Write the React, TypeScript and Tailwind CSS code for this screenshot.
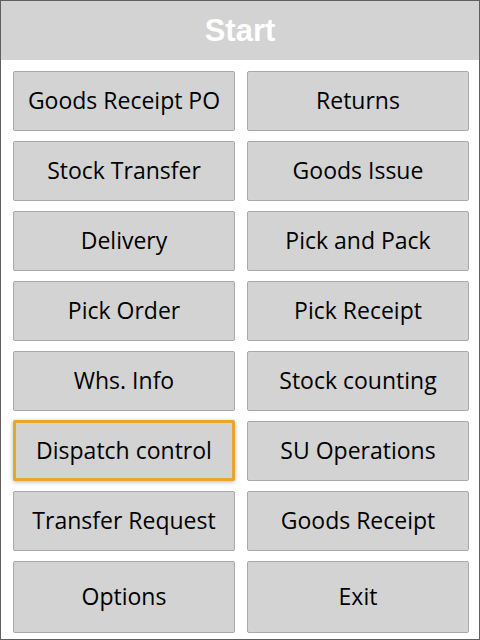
const items: string[] = [
  "Goods Receipt PO",
  "Returns",
  "Stock Transfer",
  "Goods Issue",
  "Delivery",
  "Pick and Pack",
  "Pick Order",
  "Pick Receipt",
  "Whs. Info",
  "Stock counting",
  "Dispatch control",
  "SU Operations",
  "Transfer Request",
  "Goods Receipt",
];

function MenuButton({ label, active, tall }: { label: string; active?: boolean; tall?: boolean }) {
  return (
    <button
      className={
        active
          ? "h-[61px] -mt-[1px] flex items-center justify-center pb-[1px] bg-[#d3d3d3] border-[3px] border-[#e4a82a] rounded-[2px] shadow-[0_1px_4px_rgba(0,0,0,0.3)] text-[23px] text-black"
          : tall
          ? "h-[72px] flex items-center justify-center pb-[1px] bg-[#d3d3d3] border border-[#a9a9a9] rounded-[2px] text-[23px] text-black"
          : "h-[60px] flex items-center justify-center pb-[1px] bg-[#d3d3d3] border border-[#a9a9a9] rounded-[2px] text-[23px] text-black"
      }
    >
      {label}
    </button>
  );
}

export default function App() {
  return (
    <div
      className="w-[480px] h-[640px] bg-white border border-[#5f5f5f] flex flex-col"
      style={{ fontFamily: '"Open Sans", "Noto Sans", sans-serif' }}
    >
      <div className="h-[59px] bg-[#d3d3d3] flex items-center justify-center">
        <h1
          className="text-[31px] font-bold text-white leading-none"
          style={{ fontFamily: '"Liberation Sans", Arial, sans-serif' }}
        >
          Start
        </h1>
      </div>
      <div className="grid grid-cols-2 gap-x-[12px] gap-y-[10px] pl-[12px] pr-[10px] pt-[11px]">
        {items.map((label) => (
          <MenuButton key={label} label={label} active={label === "Dispatch control"} />
        ))}
        <MenuButton label="Options" tall />
        <MenuButton label="Exit" tall />
      </div>
    </div>
  );
}
